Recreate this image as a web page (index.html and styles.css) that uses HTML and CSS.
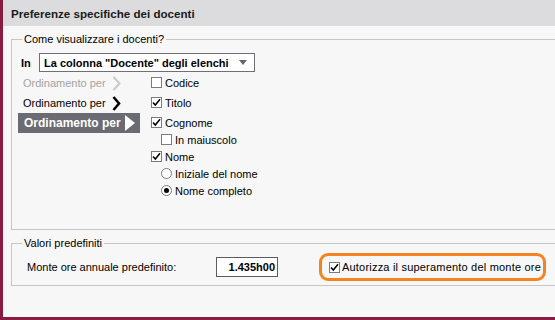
FILE: index.html
```html
<!DOCTYPE html>
<html lang="it">
<head>
    <meta charset="UTF-8">
    <meta name="viewport" content="width=device-width, initial-scale=1.0">
    <title>Preferenze docenti</title>
    <link rel="stylesheet" href="styles.css">
</head>
<body>
    <div class="window">
        <div class="head">Preferenze specifiche dei docenti</div>

        <!-- come visualizzare -->
        <fieldset class="group main">
            <legend>Come visualizzare i docenti?</legend>
            <div class="in-row">
                <span class="in-label">In</span>
                <div class="select">
                    <span>La colonna "Docente" degli elenchi</span>
                    <span class="arrow"></span>
                </div>
            </div>
            <div class="cols">
                <div class="sorts">
                    <div class="sort off">Ordinamento per
                        <svg width="9" height="15" viewBox="0 0 9 15"><path d="M1.5 1 L7.5 7.5 L1.5 14" fill="none" stroke="#c9c9c9" stroke-width="2"/></svg>
                    </div>
                    <div class="sort">Ordinamento per
                        <svg width="9" height="15" viewBox="0 0 9 15"><path d="M1.5 1 L7 7.5 L1.5 14" fill="none" stroke="#000" stroke-width="2.6"/></svg>
                    </div>
                    <div class="sort active">Ordinamento per
                        <svg width="10" height="16" viewBox="0 0 10 16"><path d="M0 0 L10 8 L0 16 Z" fill="#fff"/></svg>
                    </div>
                </div>
                <div class="opts">
                    <div class="opt"><span class="box"></span>Codice</div>
                    <div class="opt gap"><span class="box on"><svg width="9" height="9" viewBox="0 0 9 9"><path d="M1 4.5 L3.3 7 L8 1.2" fill="none" stroke="#000" stroke-width="1.5"/></svg></span>Titolo</div>
                    <div class="opt gap"><span class="box on"><svg width="9" height="9" viewBox="0 0 9 9"><path d="M1 4.5 L3.3 7 L8 1.2" fill="none" stroke="#000" stroke-width="1.5"/></svg></span>Cognome</div>
                    <div class="opt sub"><span class="box"></span>In maiuscolo</div>
                    <div class="opt"><span class="box on"><svg width="9" height="9" viewBox="0 0 9 9"><path d="M1 4.5 L3.3 7 L8 1.2" fill="none" stroke="#000" stroke-width="1.5"/></svg></span>Nome</div>
                    <div class="opt sub"><span class="radio"></span>Iniziale del nome</div>
                    <div class="opt sub"><span class="radio on"></span>Nome completo</div>
                </div>
            </div>
        </fieldset>

        <!-- valori predefiniti -->
        <fieldset class="group defaults">
            <legend>Valori predefiniti</legend>
            <div class="def-row">
                <span class="def-label">Monte ore annuale predefinito:</span>
                <div class="hours">1.435h00</div>
                <div class="highlight">
                    <span class="box on"><svg width="9" height="9" viewBox="0 0 9 9"><path d="M1 4.5 L3.3 7 L8 1.2" fill="none" stroke="#000" stroke-width="1.5"/></svg></span>
                    <span class="hl-text">Autorizza il superamento del monte ore</span>
                </div>
            </div>
        </fieldset>
    </div>
</body>
</html>
```

FILE: styles.css
```css
body{
    margin: 0;
    font-family: "Liberation Sans", Arial, sans-serif;
    font-size: 11px;
    color: #000;
}
.window{
    width: 555px;
    height: 320px;
    box-sizing: border-box;
    overflow: hidden;
    background-color: #f7f7f7;
    border-left: 3px solid #8a1a42;
    border-bottom: 3px solid #8a1a42;
}
.head{
    height: 26px;
    line-height: 27px;
    padding-left: 8px;
    background-color: #dcdcde;
    font-size: 11.6px;
    font-weight: bold;
    color: #1a1a1a;
}

/* gruppi */
.group{
    margin: 0 -20px 0 8px;
    padding: 0 0 0 6px;
    border: 1px solid #c6c6c6;
    box-sizing: border-box;
}
.group legend{
    margin-left: 4px;
    padding: 0 2px;
    line-height: 14px;
}
.main{
    margin-top: 6px;
    height: 198px;
}
.defaults{
    margin-top: 6px;
    height: 50px;
}

.in-row{
    display: flex;
    align-items: center;
    margin-top: 7px;
    height: 19px;
}
.in-label{
    width: 18px;
    padding-left: 3px;
    font-weight: bold;
}
.select{
    display: flex;
    align-items: center;
    justify-content: space-between;
    width: 216px;
    height: 19px;
    box-sizing: border-box;
    padding: 0 7px 0 4px;
    border: 1px solid #6f6f78;
    background-color: #fff;
    font-weight: bold;
}
.arrow{
    width: 0;
    height: 0;
    border-left: 4px solid transparent;
    border-right: 4px solid transparent;
    border-top: 5px solid #666;
}

.cols{
    display: flex;
    gap: 11px;
    margin-top: 1px;
}
.sorts{
    width: 122px;
}
.sort{
    display: flex;
    align-items: center;
    gap: 6px;
    height: 20px;
    padding-left: 5px;
}
.sort.off{
    color: #a3a3a3;
}
.sort.active{
    gap: 4px;
    padding-left: 6px;
    background-color: #6b6b73;
    color: #fff;
    font-size: 12px;
    font-weight: bold;
}

.opts{
    padding-top: 1px;
}
.opt{
    display: flex;
    align-items: center;
    gap: 3px;
    height: 17px;
}
.opt.gap{
    margin-top: 3px;
}
.opt.sub{
    padding-left: 10px;
}
.box{
    display: inline-flex;
    align-items: center;
    justify-content: center;
    width: 11px;
    height: 11px;
    box-sizing: border-box;
    border: 1px solid #7c7c7c;
    background-color: #fff;
}
.radio{
    display: inline-flex;
    align-items: center;
    justify-content: center;
    width: 11px;
    height: 11px;
    box-sizing: border-box;
    border: 1px solid #7c7c7c;
    border-radius: 50%;
    background-color: #fff;
}
.radio.on::after{
    content: "";
    width: 5px;
    height: 5px;
    border-radius: 50%;
    background-color: #000;
}

.def-row{
    display: flex;
    align-items: center;
    margin-top: 2px;
    padding-left: 9px;
    height: 30px;
}
.def-label{
    width: 189px;
}
.hours{
    width: 62px;
    height: 20px;
    box-sizing: border-box;
    border: 1px solid #5c5c5c;
    background-color: #fff;
    padding-right: 2px;
    text-align: right;
    line-height: 18px;
    font-weight: bold;
}
.highlight{
    display: flex;
    align-items: center;
    gap: 2px;
    margin-left: 41px;
    width: 227px;
    height: 28px;
    box-sizing: border-box;
    padding-left: 7px;
    border: 3px solid #f4841f;
    border-radius: 9px;
}
.hl-text{
    letter-spacing: 0.2px;
}
```
